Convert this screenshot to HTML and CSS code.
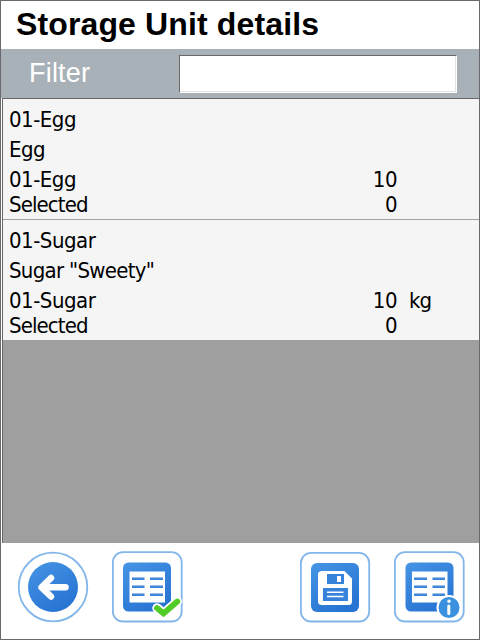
FILE: index.html
```html
<!DOCTYPE html>
<html lang="en">
<head>
<meta charset="utf-8">
<title>Storage Unit details</title>
<link rel="stylesheet" href="styles.css">
</head>
<body>
<main class="screen">
  <h1 class="title">Storage Unit details</h1>
  <div class="filter">
    <label class="filter-label" for="filter">Filter</label>
    <input class="filter-input" id="filter" type="text">
  </div>
  <section class="list">
    <article class="item">
      <div class="line"><span class="name">01-Egg</span></div>
      <div class="line"><span class="name">Egg</span></div>
      <div class="line"><span class="name">01-Egg</span><span class="qty">10</span></div>
      <div class="line last"><span class="name tight">Selected</span><span class="qty">0</span></div>
    </article>
    <article class="item">
      <div class="line"><span class="name">01-Sugar</span></div>
      <div class="line"><span class="name snug">Sugar "Sweety"</span></div>
      <div class="line"><span class="name">01-Sugar</span><span class="qty">10</span><span class="unit">kg</span></div>
      <div class="line last"><span class="name tight">Selected</span><span class="qty">0</span></div>
    </article>
  </section>
  <footer class="toolbar">
    <svg width="0" height="0" class="defs">
      <linearGradient id="blue" x1="0" y1="0" x2="0.6" y2="1">
        <stop offset="0" stop-color="#4695e5"/><stop offset="1" stop-color="#2874d3"/>
      </linearGradient>
    </svg>
    <button class="tool back" aria-label="Back">
      <svg width="72" height="72" viewBox="0 0 72 72">
        <circle cx="36" cy="36" r="34.3" fill="#fff" stroke="#83b6ea" stroke-width="1.8"/>
        <circle cx="36" cy="36" r="25" fill="url(#blue)"/>
        <path d="M34 27L24.500 36.300L34 45.500M25 36.300H48.500" fill="none" stroke="#fff" stroke-width="6.500" stroke-linecap="round" stroke-linejoin="round"/>
      </svg>
    </button>
    <button class="tool confirm" aria-label="Confirm">
      <svg width="72" height="72" viewBox="0 0 72 72">
        <rect x="1.900" y="1.200" width="68.800" height="69.300" rx="10" fill="#fff" stroke="#83b6ea" stroke-width="1.8"/>
        <rect x="12" y="11.500" width="48" height="49" rx="5.500" fill="url(#blue)"/>
        <path d="M18.500 20.500H54V51.500H18.500z" fill="#fff"/>
        <path d="M21 27.800H33.500M39 27.800H52M21 35.800H33.500M39 35.800H52M21 43.800H33.500M39 43.800H52" stroke="#3c87dc" stroke-width="2.600"/>
        <path d="M46 57L52.500 62.500L66.300 50.500" fill="none" stroke="#fff" stroke-width="9.500" stroke-linecap="round" stroke-linejoin="round"/>
        <path d="M46 57L52.500 62.500L66.300 50.500" fill="none" stroke="#51cb25" stroke-width="5.800" stroke-linecap="round"/>
      </svg>
    </button>
    <button class="tool save" aria-label="Save">
      <svg width="72" height="72" viewBox="0 0 72 72">
        <rect x="1.900" y="1.900" width="68.300" height="68.600" rx="10" fill="#fff" stroke="#83b6ea" stroke-width="1.8"/>
        <rect x="12" y="12" width="48" height="49" rx="6" fill="url(#blue)"/>
        <path d="M23 20H45.500L53 27.500V50.500Q53 54 49.500 54H23Q19 54 19 50.500V23.500Q19 20 23 20z" fill="#fff"/>
        <path d="M28 23H45V33H28zM24 37H49V50H24z" fill="#3782da"/>
        <path d="M38 25H42V31H38z" fill="#fff"/>
        <path d="M28 41.200H44.500M28 45.500H44.500" stroke="#fff" stroke-width="1.500"/>
      </svg>
    </button>
    <button class="tool info" aria-label="Information">
      <svg width="72" height="72" viewBox="0 0 72 72">
        <rect x="1.900" y="1.200" width="68.800" height="69.300" rx="10" fill="#fff" stroke="#83b6ea" stroke-width="1.8"/>
        <rect x="12.500" y="11.500" width="48" height="49" rx="5.500" fill="url(#blue)"/>
        <path d="M19 20.500H54.500V51.500H19z" fill="#fff"/>
        <path d="M21 27.800H34M39.500 27.800H52M21 35.800H34M39.500 35.800H52M21 43.800H34M39.500 43.800H52" stroke="#3c87dc" stroke-width="2.600"/>
        <circle cx="56" cy="56.500" r="11.500" fill="#3b90e0" stroke="#fff" stroke-width="2"/>
        <circle cx="56" cy="50.200" r="1.700" fill="#fff"/>
        <path d="M55.800 55V62.500" stroke="#fff" stroke-width="3" stroke-linecap="round"/>
      </svg>
    </button>
  </footer>
</main>
</body>
</html>
```
FILE: styles.css
```css
* { box-sizing: border-box; }
body { margin: 0; }
.screen {
  width: 480px;
  height: 640px;
  display: flex;
  flex-direction: column;
  border: 1px solid #69696b;
  background: #fff;
  font-family: "Liberation Sans", Arial, sans-serif;
}
.title {
  margin: 0;
  height: 48px;
  padding-left: 15px;
  font-size: 32px;
  line-height: 46px;
  letter-spacing: 0.13px;
  color: #000;
}
.filter {
  display: flex;
  align-items: flex-start;
  height: 49px;
  padding-top: 6px;
  background: #a8b1b8;
}
.filter-label {
  width: 178px;
  padding-left: 28px;
  font-size: 27px;
  line-height: 36px;
  letter-spacing: 0.2px;
  color: #fff;
}
.filter-input {
  width: 278px;
  height: 38px;
  border: 1px solid #fff;
  border-top-color: #68686b;
  border-left-color: #68686b;
  padding: 0 4px;
  background: #fff;
  font-size: 24px;
  box-shadow: inset -1px -1px #e3e3e3;
}
.list {
  height: 445px;
  border-top: 1px solid #68686b;
  border-left: 1px solid #68686b;
  margin-left: 1px;
  background: #9f9f9f;
  font: 22px "DejaVu Sans Condensed", "DejaVu Sans", sans-serif;
  font-stretch: condensed;
  color: #000;
}
.item {
  height: 120px;
  padding: 6px 0 0 6px;
  background: #f5f5f5;
}
.item + .item {
  height: 121px;
  border-top: 1px solid #a0a0a0;
}
.line {
  display: grid;
  grid-template-columns: 200px 188px 60px;
  height: 30px;
  line-height: 30px;
  letter-spacing: -0.5px;
  white-space: nowrap;
}
.line.last { margin-top: -5px; }
.tight { letter-spacing: -0.9px; }
.snug { letter-spacing: -0.7px; }
.qty { text-align: right; }
.unit { padding-left: 12px; letter-spacing: -1px; }
.toolbar {
  display: flex;
  height: 95px;
  padding: 8px 0 0 16px;
}
.defs { position: absolute; }
.tool {
  width: 72px;
  height: 72px;
  padding: 0;
  border: 0;
  background: none;
}
.tool svg { display: block; }
.confirm { margin-left: 22px; }
.save { margin-left: 116px; }
.info { margin-left: 22px; }
```
